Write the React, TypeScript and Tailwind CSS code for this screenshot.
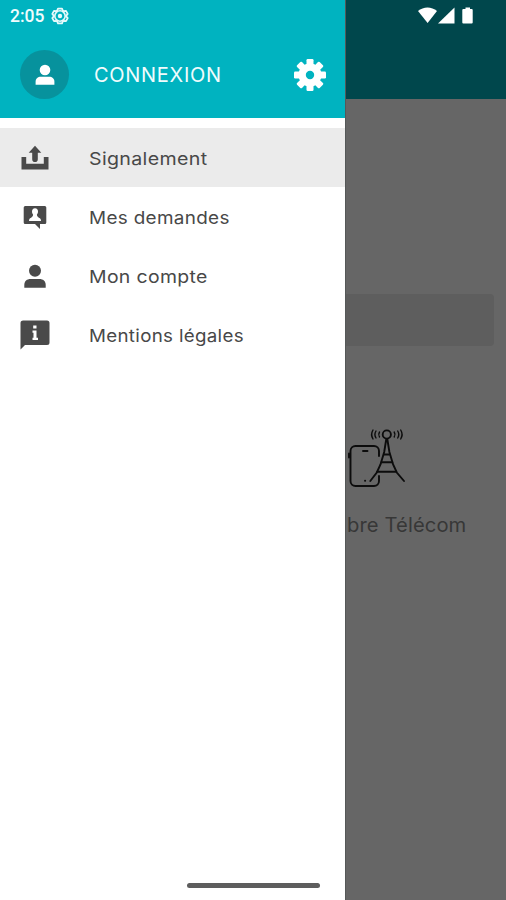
import type { ReactNode } from "react";

const menuItems: { label: string; stretch: string; icon: ReactNode; active?: boolean }[] = [
    {
        label: "Signalement",
        stretch: "scale-x-[1.12]",
        active: true,
        icon: (
            <svg viewBox="0 0 30 30" className="h-[30px] w-[30px]" fill="#4a4a4a">
                <path d="M1.500 14h4.700v6.800h17.600V14h4.700v12.500h-27z" />
                <path d="M15 2.800l6.300 7h-3.500v6.500a2.800 2.800 0 0 1-5.600 0V9.800H8.700z" />
            </svg>
        ),
    },
    {
        label: "Mes demandes",
        stretch: "scale-x-[1.08]",
        icon: (
            <svg viewBox="0 0 30 30" className="h-[30px] w-[30px]">
                <path d="M5.200 4h19.600a1.500 1.500 0 0 1 1.500 1.500v15a1.500 1.500 0 0 1-1.500 1.500h-4.800v5l-5-5H5.200a1.500 1.500 0 0 1-1.500-1.500v-15A1.500 1.500 0 0 1 5.200 4z" fill="#4a4a4a" />
                <path d="M15 6.200c2 0 3 1.500 3 3.200 0 1.500-.5 2.400-1.100 3.100.1 1.800.9 2.700 2.400 3.400 1 .4 1.700 1.100 1.700 3.100H9c0-2 .7-2.700 1.700-3.100 1.500-.7 2.300-1.600 2.400-3.400-.6-.7-1.100-1.600-1.100-3.100 0-1.700 1-3.200 3-3.200z" fill="#fff" />
            </svg>
        ),
    },
    {
        label: "Mon compte",
        stretch: "scale-x-[1.11]",
        icon: (
            <svg viewBox="0 0 30 30" className="h-[30px] w-[30px]" fill="#4a4a4a">
                <circle cx="15" cy="9.800" r="6" />
                <path d="M4.300 26.800v-2.800c0-4 2.700-6 6.200-6h9c3.500 0 6.200 2 6.200 6v2.800z" />
            </svg>
        ),
    },
    {
        label: "Mentions légales",
        stretch: "scale-x-[1.07]",
        icon: (
            <svg viewBox="0 0 30 30" className="h-[30px] w-[30px]">
                <path d="M3.500.5h23.500a2.500 2.500 0 0 1 2.500 2.500v19.500a2.500 2.500 0 0 1-2.500 2.500H5L.5 29.500V3A2.500 2.500 0 0 1 3.500.5z" fill="#4a4a4a" />
                <path d="M13.200 5.500h3.300v3h-3.300zM12.500 10.500h4v7.200h1.500V20h-5.500v-2.300h1v-4.900h-1z" fill="#fff" />
            </svg>
        ),
    },
];

function GearIcon() {
    return (
        <svg viewBox="-16 -16 32 32" className="h-8 w-8" fill="#fff">
            <path
                fillRule="evenodd"
                d="M0-11.500a11.500 11.500 0 1 0 0 23a11.500 11.500 0 1 0 0-23zM0-4.200a4.200 4.200 0 1 1 0 8.400a4.200 4.200 0 1 1 0-8.400z"
            />
            {[0, 45, 90, 135, 180, 225, 270, 315].map((angle) => (
                <rect key={angle} x="-3.500" y="-16" width="7" height="7.500" rx="1.200" transform={`rotate(${angle})`} />
            ))}
        </svg>
    );
}

function StatusGear() {
    return (
        <svg viewBox="0 0 18 18" className="h-[18px] w-[18px]" fill="none" stroke="#e8fafb">
            <path d="M7 1.700h4l.8 1.800 1.200.7 2-.3 1.700 3-1.200 1.400v1.400l1.200 1.400-1.700 3-2-.3-1.200.7-.8 1.800H7l-.8-1.800-1.200-.7-2 .3-1.700-3 1.200-1.400V8.300L1.300 6.900l1.700-3 2 .3 1.200-.7z" strokeWidth="1.800" strokeLinejoin="round" />
            <circle cx="9" cy="9" r="5.200" strokeWidth="1.600" />
            <circle cx="9" cy="9" r="2.200" fill="#e8fafb" stroke="none" />
        </svg>
    );
}

function StatusIcons() {
    return (
        <svg viewBox="0 0 58 18" className="h-[18px] w-[58px]" fill="#fff">
            <path d="M0 4C5.500-.8 13.500-.8 19 4l-9.400 12z" />
            <path d="M36.500.5v16H20z" />
            <path d="M47.500.5h4.500V2h1.700a1 1 0 0 1 1 1v12.500a1 1 0 0 1-1 1h-8.400a1 1 0 0 1-1-1V3a1 1 0 0 1 1-1h2.200z" />
        </svg>
    );
}

function TelecomIcon() {
    return (
        <svg viewBox="0 0 58 62" className="h-[62px] w-[58px]" fill="none" stroke="#0c0c0c" strokeWidth="1.900" strokeLinecap="round">
            {/* Phone */}
            <path d="M31 29v-5a5 5 0 0 0-5-5H7.500a5 5 0 0 0-5 5v30a5 5 0 0 0 5 5H26a5 5 0 0 0 5-5v-5" />
            <path d="M15 24h4.500M1 26.500v4M17 53.700h.2" />
            {/* Tower */}
            <circle cx="38.800" cy="7.500" r="4.100" />
            <path d="M38.300 12L36.200 25 32.500 37.500 28.800 45.500 22.300 54M39.300 12l2.100 13 3.700 12.500 3.700 8L56 54" />
            <path d="M36.300 27.500h5M33.500 35.300h10.800M29.300 44.700h18.500" />
            {/* Waves */}
            <path d="M31.500 5q-1.600 2.500 0 5M28 4q-2.200 3.500 0 7M25 3q-2.800 4.500 0 9M46.200 5q1.600 2.500 0 5M49.700 4q2.200 3.500 0 7M52.700 3q2.800 4.500 0 9" strokeWidth="1.400" />
        </svg>
    );
}

export default function App() {
    return (
        <div className="flex h-[900px] w-[506px] overflow-hidden bg-[#666666] font-[Inter,sans-serif]">
            {/* Drawer */}
            <aside className="flex w-[345px] shrink-0 flex-col bg-white">
                <header className="h-[118px] bg-[#00b3c0] text-[#f0fcfd]">
                    <div className="flex h-8 items-center gap-[6px] pl-[10px]">
                        <span className="w-[35px] whitespace-nowrap font-[Roboto,sans-serif] text-[17.5px] font-medium leading-8">2:05</span>
                        <StatusGear />
                    </div>
                    <div className="flex h-[85px] items-center pr-[19px] pl-5">
                        <div className="flex h-[49px] w-[49px] items-center justify-center rounded-full bg-[#07929d]">
                            <svg viewBox="0 0 20 22" className="h-[22px] w-5" fill="#fff">
                                <circle cx="10" cy="6" r="5.300" />
                                <path d="M.6 20.700v-3c0-3.500 2.500-5 5-5h8.800c2.500 0 5 1.500 5 5v3z" />
                            </svg>
                        </div>
                        <span className="ml-[25px] flex-1 pt-px text-xl leading-6 tracking-[0.7px]">CONNEXION</span>
                        <GearIcon />
                    </div>
                </header>
                <nav className="flex-1 pt-[10px]">
                    {menuItems.map(({ label, stretch, icon, active }) => (
                        <button
                            key={label}
                            className={`flex h-[59px] w-full items-center pl-5 text-left text-[#484848] ${active ? "bg-[#ebebeb]" : ""}`}
                        >
                            {icon}
                            <span className={`ml-[39px] origin-left whitespace-nowrap pt-[2px] text-[17.5px] leading-6 tracking-[0.3px] ${stretch}`}>
                                {label}
                            </span>
                        </button>
                    ))}
                </nav>
                <div className="mb-3 ml-[187px] h-[5px] w-[133px] rounded-full bg-[#5d5d5d]" />
            </aside>

            {/* Dimmed page */}
            <main className="flex-1 border-l border-[#555858] bg-[#666666]">
                <div className="h-[99px] bg-[#00474c] pt-[7px] pl-[72px]">
                    <StatusIcons />
                </div>
                <div className="mt-[195px] mr-3 h-[52px] rounded-r-sm bg-[#5e5e5e]" />
                <div className="mt-[81px] pl-[2px]">
                    <TelecomIcon />
                    <p className="mt-[24px] -ml-px origin-left scale-x-[1.035] whitespace-nowrap text-[19.5px] leading-6 tracking-[0.1px] text-[#373737]">
                        bre Télécom
                    </p>
                </div>
            </main>
        </div>
    );
}
